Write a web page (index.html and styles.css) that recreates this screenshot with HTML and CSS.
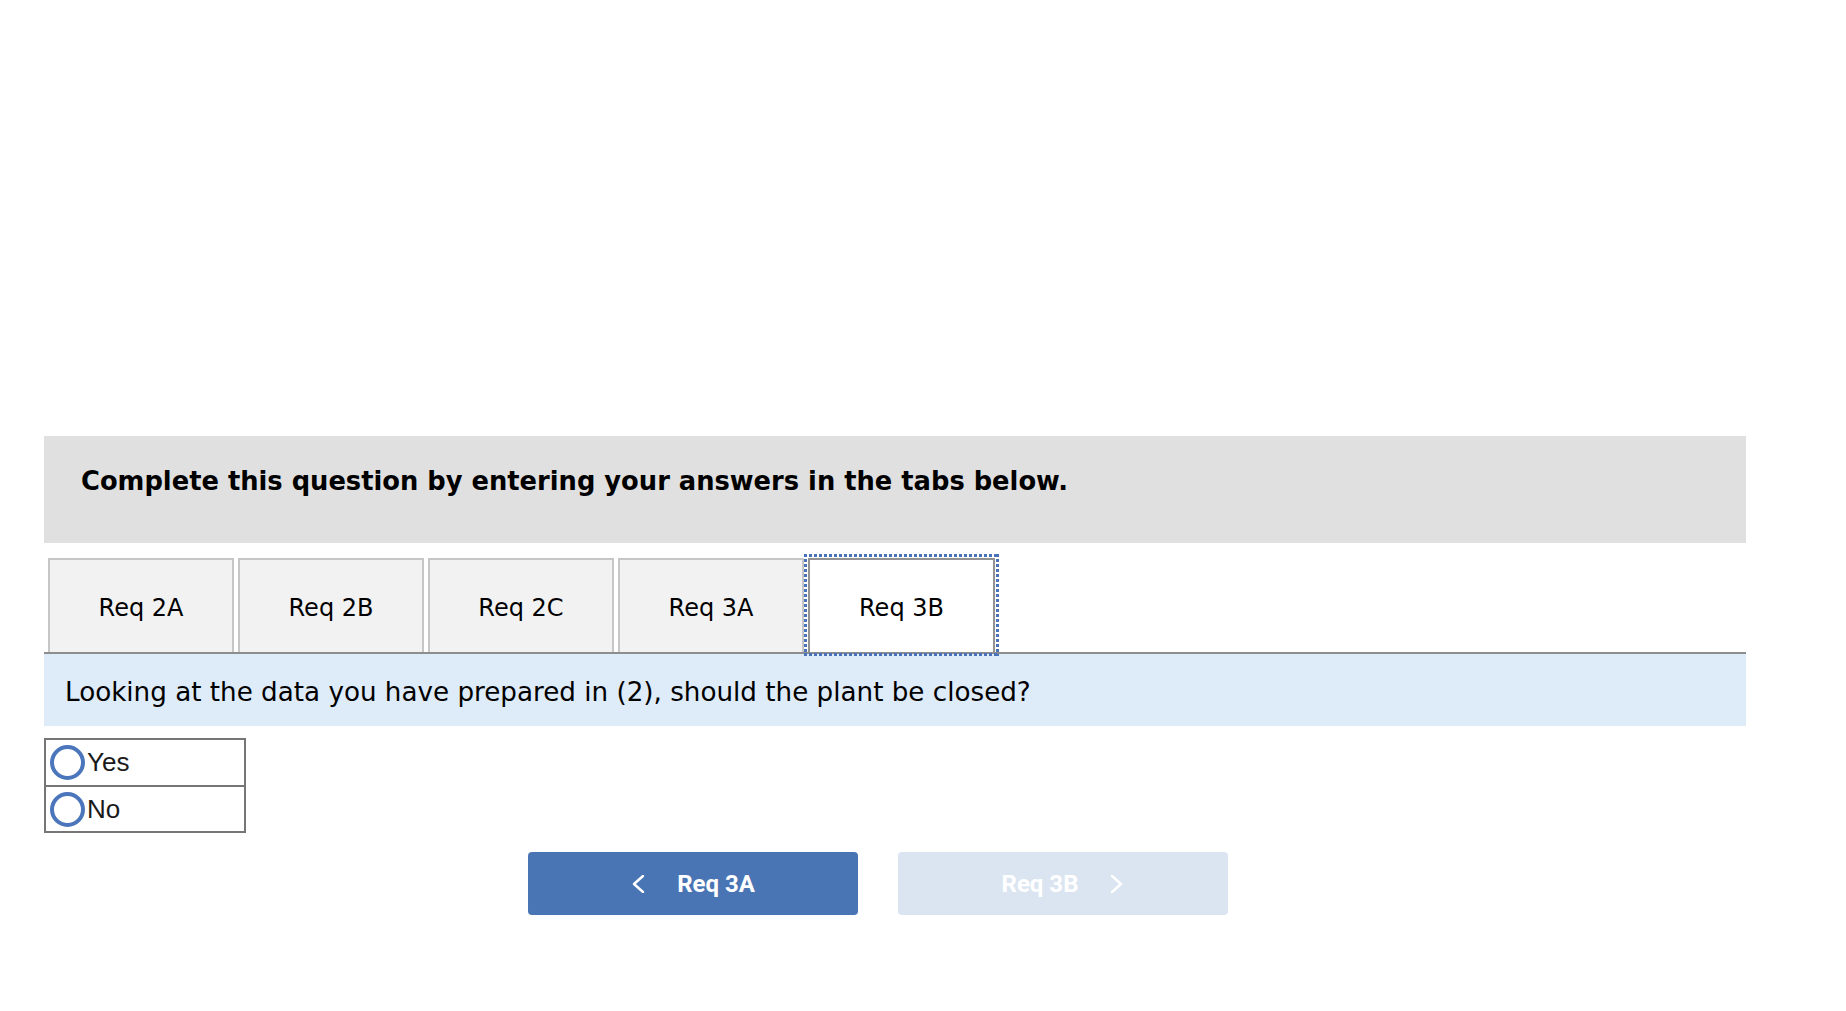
FILE: index.html
```html
<!DOCTYPE html>
<html>
<head>
<meta charset="utf-8">
<link rel="stylesheet" href="styles.css">
</head>
<body>
<div class="page">
  <div class="header">Complete this question by entering your answers in the tabs below.</div>
  <div class="tabs">
    <div class="tab">Req 2A</div>
    <div class="tab">Req 2B</div>
    <div class="tab">Req 2C</div>
    <div class="tab">Req 3A</div>
    <div class="tab active">Req 3B</div>
  </div>
  <div class="question">Looking at the data you have prepared in (2), should the plant be closed?</div>
  <div class="options">
    <label class="option"><input type="radio" name="close" class="radio"><span>Yes</span></label>
    <label class="option"><input type="radio" name="close" class="radio"><span>No</span></label>
  </div>
  <div class="nav">
    <button class="btn prev">
      <svg class="chev" width="14" height="18" viewBox="0 0 14 18"><polyline points="12,1 3,9 12,17" fill="none" stroke="#fff" stroke-width="2.4" stroke-linecap="round" stroke-linejoin="round"/></svg>
      <span>Req 3A</span>
    </button>
    <button class="btn next">
      <span>Req 3B</span>
      <svg class="chev" width="14" height="18" viewBox="0 0 14 18"><polyline points="2,1 11,9 2,17" fill="none" stroke="#fff" stroke-width="2.4" stroke-linecap="round" stroke-linejoin="round"/></svg>
    </button>
  </div>
</div>
</body>
</html>
```

FILE: styles.css
```css
html, body {
  margin: 0;
  padding: 0;
  background: #ffffff;
}

.page {
  width: 1702px;
  padding: 436px 0 0 44px;
  font-family: "DejaVu Sans", Verdana, sans-serif;
  color: #000;
}

.header {
  background: #e0e0e0;
  height: 107px;
  box-sizing: border-box;
  padding: 30px 0 0 37px;
  font-size: 25.75px;
  line-height: 30px;
  font-weight: bold;
}

.tabs {
  display: flex;
  margin-top: 15px;
  padding-left: 4px;
  border-bottom: 2px solid #8e8e8e;
}

.tab {
  position: relative;
  width: 186px;
  height: 94px;
  box-sizing: border-box;
  margin-right: 4px;
  border: 2px solid #c6c6c6;
  border-bottom: none;
  background: #f2f2f2;
  padding-top: 34px;
  text-align: center;
  font-size: 24px;
  line-height: 28px;
}

.tab.active {
  width: 187px;
  background: #ffffff;
  border-color: #929292;
}

.tab.active::before {
  content: "";
  position: absolute;
  top: -6px;
  left: -6px;
  right: -6px;
  bottom: -4px;
  background:
    repeating-linear-gradient(90deg, #4a72b8 0 3px, transparent 3px 5px) left top / 100% 3px no-repeat,
    repeating-linear-gradient(90deg, #4a72b8 0 3px, transparent 3px 5px) left bottom / 100% 3px no-repeat,
    repeating-linear-gradient(180deg, #4a72b8 0 3px, transparent 3px 5px) left top / 3px 100% no-repeat,
    repeating-linear-gradient(180deg, #4a72b8 0 3px, transparent 3px 5px) right top / 3px 100% no-repeat;
  pointer-events: none;
}

.question {
  background: #deebf8;
  height: 72px;
  box-sizing: border-box;
  padding: 23px 0 0 21px;
  font-size: 26.2px;
  line-height: 30px;
}

.options {
  margin-top: 12px;
  width: 202px;
  box-sizing: border-box;
  border: 2px solid #767676;
  font-family: "Liberation Sans", Arial, sans-serif;
  font-size: 26px;
  color: #1a1a1a;
}

.option {
  display: flex;
  align-items: center;
  height: 45px;
}

.option + .option {
  border-top: 2px solid #767676;
  height: 44px;
}

.radio {
  appearance: none;
  -webkit-appearance: none;
  width: 35px;
  height: 35px;
  box-sizing: border-box;
  margin: 0 2px 0 4px;
  border: 4px solid #4b76bb;
  border-radius: 50%;
  background: #fff;
}

.nav {
  display: flex;
  justify-content: center;
  gap: 40px;
  margin-top: 19px;
  padding-right: 34px;
}

.btn {
  width: 330px;
  height: 63px;
  border: none;
  border-radius: 4px;
  display: flex;
  align-items: center;
  justify-content: center;
  gap: 32px;
  font-family: Roboto, "Liberation Sans", sans-serif;
  font-weight: bold;
  font-size: 24px;
  color: #ffffff;
  padding: 0;
}

.btn.prev {
  background: #4a75b5;
}

.btn.next {
  background: #dbe5f1;
}

.chev {
  display: block;
}
```
